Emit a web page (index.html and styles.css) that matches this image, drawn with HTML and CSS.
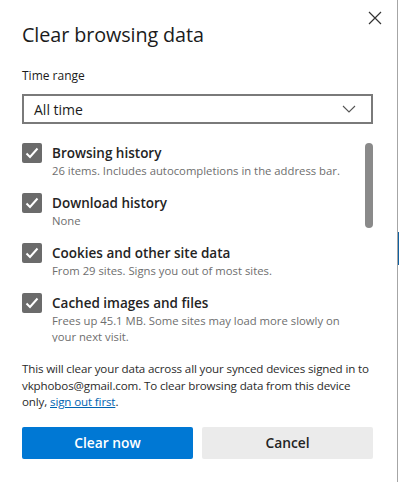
FILE: index.html
```html
<!DOCTYPE html>
<html>
<head>
    <title>Clear browsing data</title>
    <link rel="stylesheet" href="styles.css">
</head>
<body>
    <div class="page">
        <div class="dialog">
            <button class="close" aria-label="Close">
                <svg width="14" height="14" viewBox="0 0 14 14"><path d="M1 1 L13 13 M13 1 L1 13" stroke="#333" stroke-width="1.2" fill="none"/></svg>
            </button>
            <h1>Clear browsing data</h1>

            <div class="field-label">Time range</div>
            <div class="select">
                <span>All time</span>
                <svg width="14" height="8" viewBox="0 0 14 8"><path d="M1 1 L7 7 L13 1" stroke="#555" stroke-width="1.1" fill="none"/></svg>
            </div>

            <div class="scroll-area">
                <div class="items">
                    <div class="item">
                        <span class="check"><svg width="14" height="12" viewBox="0 0 14 12"><path d="M1.5 6.5 L5 10 L12.5 1.5" stroke="#fff" stroke-width="2" fill="none"/></svg></span>
                        <div>
                            <div class="item-title">Browsing history</div>
                            <div class="item-desc">26 items. Includes autocompletions in the address bar.</div>
                        </div>
                    </div>
                    <div class="item">
                        <span class="check"><svg width="14" height="12" viewBox="0 0 14 12"><path d="M1.5 6.5 L5 10 L12.5 1.5" stroke="#fff" stroke-width="2" fill="none"/></svg></span>
                        <div>
                            <div class="item-title">Download history</div>
                            <div class="item-desc">None</div>
                        </div>
                    </div>
                    <div class="item">
                        <span class="check"><svg width="14" height="12" viewBox="0 0 14 12"><path d="M1.5 6.5 L5 10 L12.5 1.5" stroke="#fff" stroke-width="2" fill="none"/></svg></span>
                        <div>
                            <div class="item-title">Cookies and other site data</div>
                            <div class="item-desc">From 29 sites. Signs you out of most sites.</div>
                        </div>
                    </div>
                    <div class="item">
                        <span class="check"><svg width="14" height="12" viewBox="0 0 14 12"><path d="M1.5 6.5 L5 10 L12.5 1.5" stroke="#fff" stroke-width="2" fill="none"/></svg></span>
                        <div>
                            <div class="item-title">Cached images and files</div>
                            <div class="item-desc">Frees up 45.1 MB. Some sites may load more slowly on your next visit.</div>
                        </div>
                    </div>
                </div>
                <div class="scrollbar"><div class="thumb"></div></div>
            </div>

            <p class="info">This will clear your data across all your synced devices signed in to vkphobos@gmail.com. To clear browsing data from this device only, <a href="#">sign out first</a>.</p>

            <div class="buttons">
                <button class="btn primary">Clear now</button>
                <button class="btn secondary">Cancel</button>
            </div>
        </div>
        <div class="edge"><span class="edge-blue"></span></div>
    </div>
</body>
</html>
```
FILE: styles.css
```css
body {
    margin: 0;
    font-family: "Open Sans", "Noto Sans", sans-serif;
    color: #1b1b1b;
    background: #fff;
}
.page {
    display: flex;
    height: 482px;
}
.dialog {
    flex: 1;
    position: relative;
    box-sizing: border-box;
    padding: 21px 24px 0 22px;
    border-right: 1px solid #a6a6a6;
}
.close {
    position: absolute;
    top: 10px;
    right: 14px;
    width: 16px;
    height: 16px;
    padding: 0;
    border: none;
    background: none;
    display: flex;
    align-items: center;
    justify-content: center;
}
h1 {
    margin: 0;
    font-size: 19.8px;
    font-weight: 400;
    line-height: 28px;
    letter-spacing: -0.1px;
}
.field-label {
    margin-top: 19px;
    font-size: 12px;
    line-height: 16px;
}
.select {
    margin-top: 10px;
    height: 30px;
    box-sizing: border-box;
    border: 2px solid #7a7a7a;
    display: flex;
    align-items: center;
    justify-content: space-between;
    padding: 0 15px 0 10px;
    font-size: 14px;
}
.scroll-area {
    margin-top: 19px;
    height: 199px;
    overflow: hidden;
    display: flex;
}
.items {
    flex: 1;
}
.item {
    display: flex;
    align-items: flex-start;
    margin-bottom: 14px;
}
.check {
    width: 20px;
    height: 20px;
    flex: none;
    margin-right: 10px;
    background: #6b6b6b;
    border-radius: 2px;
    display: flex;
    align-items: center;
    justify-content: center;
}
.item-title {
    font-size: 13.5px;
    font-weight: 600;
    line-height: 20px;
    color: #242424;
}
.item-desc {
    font-size: 11.3px;
    line-height: 16px;
    color: #6e6e6e;
    max-width: 300px;
}
.scrollbar {
    width: 8px;
    margin-right: 0;
}
.thumb {
    height: 85px;
    background: #8a8a8a;
    border-radius: 4px;
}
.info {
    margin: 19px 0 0;
    font-size: 11.6px;
    line-height: 16.5px;
    letter-spacing: -0.14px;
    color: #2b2b2b;
}
.info a {
    color: #0063b1;
    text-decoration: underline;
}
.buttons {
    display: flex;
    gap: 9px;
    margin-top: 16px;
}
.btn {
    flex: 1;
    height: 32px;
    border: none;
    border-radius: 2px;
    font-family: inherit;
    font-size: 13.8px;
    font-weight: 600;
}
.primary {
    background: #0078d4;
    color: #fff;
}
.secondary {
    background: #ebebeb;
    color: #242424;
}
.edge {
    width: 1px;
    position: relative;
}
.edge-blue {
    position: absolute;
    top: 232px;
    height: 33px;
    left: 0;
    width: 1px;
    background: #1060a0;
}
```
